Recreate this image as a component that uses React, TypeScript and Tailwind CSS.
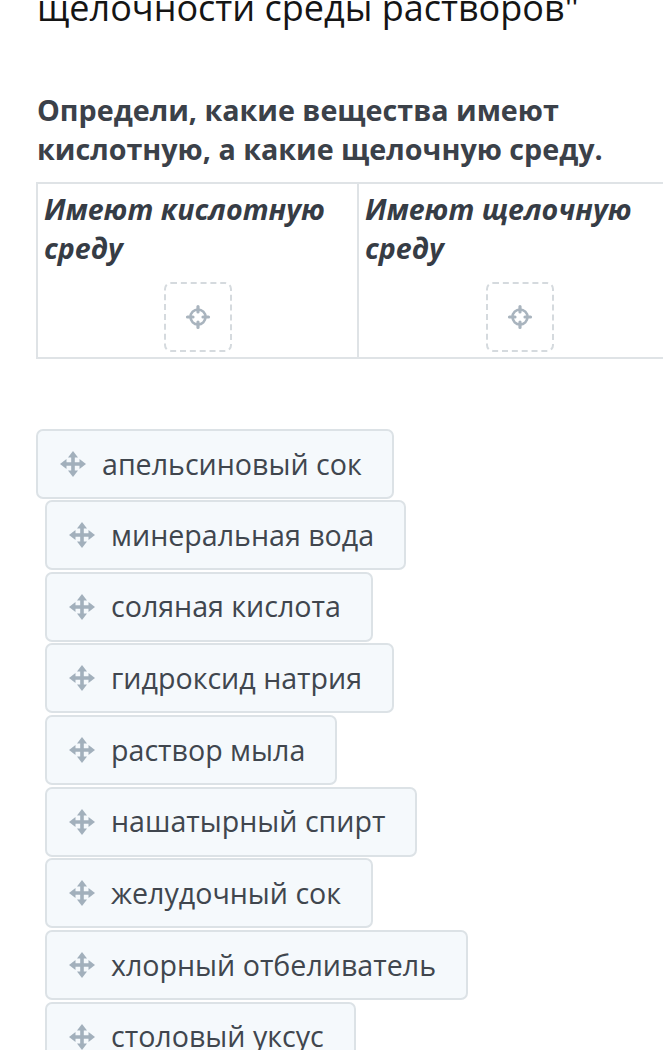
const items = [
  "апельсиновый сок",
  "минеральная вода",
  "соляная кислота",
  "гидроксид натрия",
  "раствор мыла",
  "нашатырный спирт",
  "желудочный сок",
  "хлорный отбеливатель",
  "столовый уксус",
];

function MoveIcon() {
  return (
    <svg width="28" height="28" viewBox="0 0 28 28" className="shrink-0" fill="#a2b0bc">
      <rect x="12.2" y="5" width="3.6" height="18" rx="0.5" />
      <rect x="5" y="12.2" width="18" height="3.6" rx="0.5" />
      <path d="M14 1 L19 7.5 L9 7.5 Z" />
      <path d="M14 27 L19 20.5 L9 20.5 Z" />
      <path d="M1 14 L7.5 9 L7.5 19 Z" />
      <path d="M27 14 L20.5 9 L20.5 19 Z" />
    </svg>
  );
}

function Crosshair() {
  return (
    <svg width="26" height="26" viewBox="0 0 26 26" fill="none" stroke="#a9b4be" strokeLinecap="round">
      <circle cx="13" cy="13" r="7.5" strokeWidth="2.6" />
      <path d="M13 2.5 V8 M13 18 V23.5 M2.5 13 H8 M18 13 H23.5" strokeWidth="3.2" />
    </svg>
  );
}

function Column({ title }: { title: string }) {
  return (
    <div className="flex flex-col px-[6px] pt-[5px] pb-[5px]">
      <div className="text-[28.6px] leading-[39px] font-bold italic text-[#363c45]">{title}</div>
      <div className="flex justify-center mt-[15px]">
        <div className="w-[68px] h-[70px] rounded-[7px] border-2 border-dashed border-[#d5dade] flex items-center justify-center">
          <Crosshair />
        </div>
      </div>
    </div>
  );
}

export default function App() {
  return (
    <div
      className="w-[663px] h-[1050px] overflow-hidden bg-white pl-[37px]"
      style={{ fontFamily: '"Open Sans", "Liberation Sans", sans-serif' }}
    >
      <h1 className="mt-[-15px] text-[36px] leading-[46px] font-normal text-[#151515] whitespace-nowrap">
        щелочности среды растворов"
      </h1>
      <p className="mt-[59px] text-[28.7px] leading-[39px] font-bold text-[#3b4149] w-[620px]">
        Определи, какие вещества имеют кислотную, а какие щелочную среду.
      </p>
      <div className="mt-[14px] w-[646px] -ml-[1px] grid grid-cols-2 border-2 border-[#dfe3e6]">
        <div className="border-r-2 border-[#dfe3e6]">
          <Column title="Имеют кислотную среду" />
        </div>
        <Column title="Имеют щелочную среду" />
      </div>
      <div className="mt-[70px] flex flex-col items-start">
        {items.map((t, i) => (
          <div
            key={t}
            className={
              "h-[70px] flex items-center gap-[15px] pl-[21px] pr-[30px] rounded-[7px] border-2 border-[#dce2e6] bg-[#f5f9fc] text-[28.6px] text-[#40464e] whitespace-nowrap " +
              (i === 0 ? "-ml-[1px] mb-px" : "ml-[8px] mb-[1.7px]")
            }
          >
            <MoveIcon />
            <span>{t}</span>
          </div>
        ))}
      </div>
    </div>
  );
}
